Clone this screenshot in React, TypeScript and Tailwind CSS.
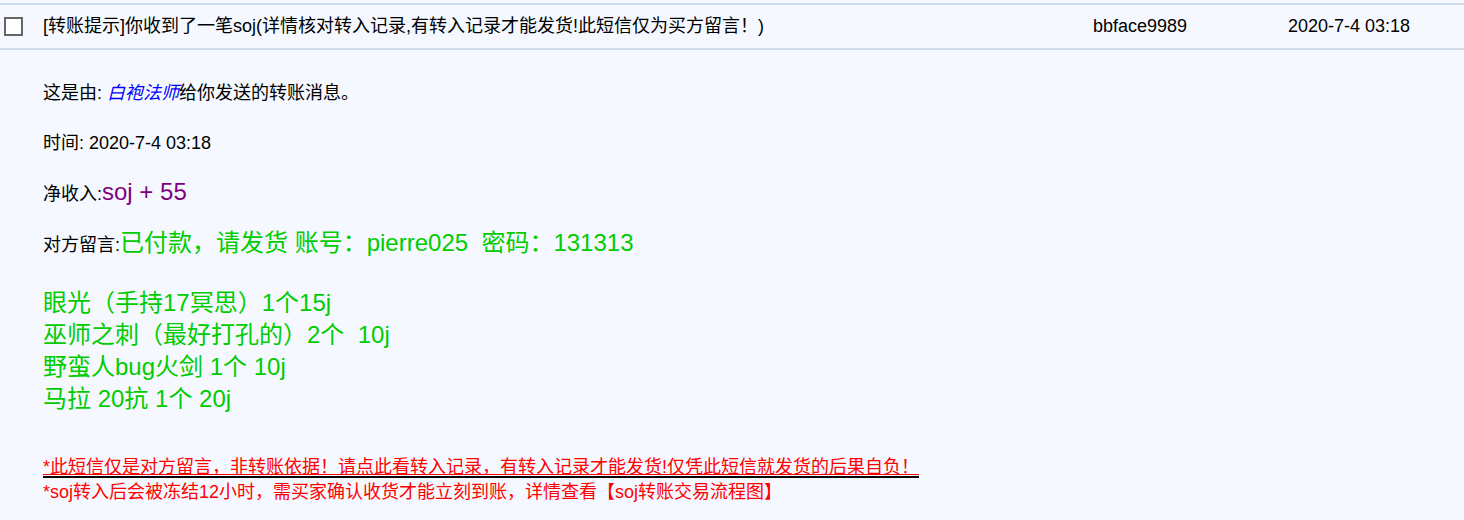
import React from "react";

const items = [
  "眼光（手持17冥思）1个15j",
  "巫师之刺（最好打孔的）2个  10j",
  "野蛮人bug火剑 1个 10j",
  "马拉 20抗 1个 20j",
];

export default function App() {
  return (
    <div className="w-[1464px] h-[520px] overflow-hidden bg-[#f5f9ff] pt-[3px] text-[18px] text-black font-['Liberation_Sans','Noto_Sans_CJK_SC',sans-serif]">
      {/* message row */}
      <div className="flex items-center h-[47px] border-y-2 border-[#cddbea]">
        <div className="ml-[4px] w-[19px] h-[19px] border-2 border-[#666] bg-white" />
        <div className="ml-[20px] w-[1050px] whitespace-nowrap">
          [转账提示]你收到了一笔soj(详情核对转入记录,有转入记录才能发货!此短信仅为买方留言！)
        </div>
        <div className="w-[195px]">bbface9989</div>
        <div>2020-7-4 03:18</div>
      </div>

      {/* detail */}
      <div className="pl-[43px]">
        <p className="mt-[31px] leading-[24px]">
          这是由: <a className="italic text-[#0000ff]">白袍法师</a>给你发送的转账消息。
        </p>
        <p className="mt-[26px] leading-[24px]">时间: 2020-7-4 03:18</p>
        <p className="mt-[21px] leading-[32px]">
          净收入:<span className="text-[24px] text-[#800080]">soj + 55</span>
        </p>
        <p className="mt-[17px] leading-[32px]">
          对方留言:
          <span className="text-[24px] text-[#00cc00] whitespace-pre">
            已付款，请发货 账号：pierre025  密码：131313
          </span>
        </p>
        <div className="mt-[26px] text-[24px] leading-[32px] text-[#00cc00]">
          {items.map((t) => (
            <div key={t} className="whitespace-pre">
              {t}
            </div>
          ))}
        </div>
        <div className="mt-[43px] text-[#ff0000]">
          <div className="w-fit leading-[18px] border-b-2 border-black">
            <span className="underline">
              *此短信仅是对方留言，非转账依据！请点此看转入记录，有转入记录才能发货!仅凭此短信就发货的后果自负！
            </span>
          </div>
          <div className="mt-[2px] leading-[24px]">
            *soj转入后会被冻结12小时，需买家确认收货才能立刻到账，详情查看【soj转账交易流程图】
          </div>
        </div>
      </div>
    </div>
  );
}
